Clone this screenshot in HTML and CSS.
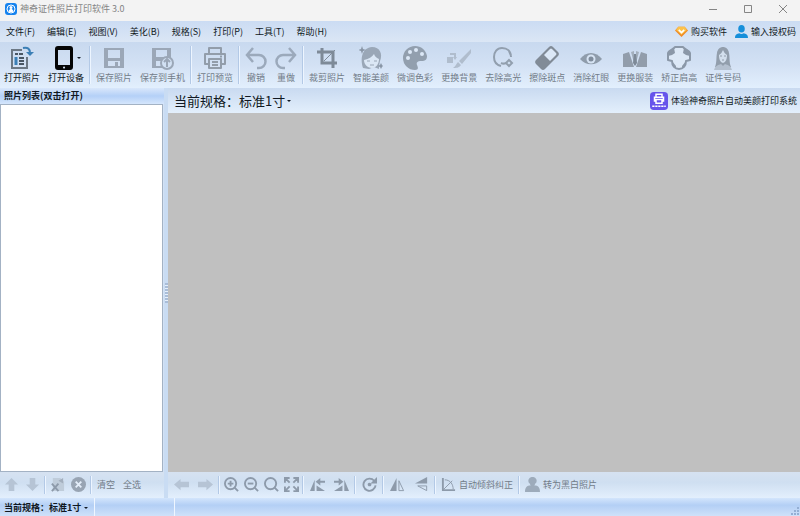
FILE: index.html
```html
<!DOCTYPE html>
<html lang="zh-CN">
<head>
  <meta charset="UTF-8">
  <meta name="viewport" content="width=device-width, initial-scale=1.0">
  <title>神奇证件照片打印软件 3.0</title>
  <link rel="stylesheet" href="styles.css">
</head>
<body>
  <header class="titlebar">
    <svg class="app-logo" viewBox="0 0 24 24"><rect width="24" height="24" rx="6" fill="#1683ee"/><circle cx="12" cy="12" r="8" fill="none" stroke="#fff" stroke-width="2"/><circle cx="12" cy="9" r="3" fill="#fff"/><path d="M7 17c1-4 3-5 5-5s4 1 5 5c-3 2-7 2-10 0z" fill="#fff"/></svg>
    <h1>神奇证件照片打印软件 3.0</h1>
    <div class="window-controls">
      <button aria-label="最小化"><svg viewBox="0 0 10 10"><path d="M1 5.5h8"/></svg></button>
      <button aria-label="最大化"><svg viewBox="0 0 10 10"><path d="M1.5 1.5h7v7h-7z"/></svg></button>
      <button aria-label="关闭"><svg viewBox="0 0 10 10"><path d="M1 1l8 8M9 1l-8 8"/></svg></button>
    </div>
  </header>

  <nav class="menubar">
    <button>文件(F)</button>
    <button>编辑(E)</button>
    <button>视图(V)</button>
    <button>美化(B)</button>
    <button>规格(S)</button>
    <button>打印(P)</button>
    <button>工具(T)</button>
    <button>帮助(H)</button>
    <div class="account">
      <a href="#buy">
        <svg viewBox="0 0 24 24"><path d="M6 3h12l6 7-12 12L0 10z" fill="#f08a24"/><path d="M6 3h12l4 6-10 9L2 9z" fill="#fcc24a"/><path d="M7 9l5 5 5-5" fill="none" stroke="#fff" stroke-width="3"/></svg>
        购买软件
      </a>
      <a href="#license">
        <svg viewBox="0 0 24 24"><ellipse cx="12" cy="7" rx="6" ry="7" fill="#168fda"/><path d="M0 24c0-7 4-8 8-9 2 2 6 2 8 0 4 1 8 2 8 9z" fill="#168fda"/></svg>
        输入授权码
      </a>
    </div>
  </nav>

  <div class="toolbar">
    <button class="tool">
      <svg viewBox="0 0 24 24"><path d="M12 4H2v18h15V11" fill="none" stroke="#6c7884" stroke-width="2"/><path d="M5 8h3M9 8h4M9 12h5M9 15h5M9 18h5" stroke="#4a5764" stroke-width="2"/><path d="M6 11v8" stroke="#3b7fb5" stroke-width="3"/><path d="M13 2c5-1 7 1 7 5" fill="none" stroke="#3b7fb5" stroke-width="2"/><path d="M16 6h8l-4 4z" fill="#3b7fb5"/></svg>
      打开照片
    </button>
    <button class="tool has-menu">
      <svg viewBox="0 0 24 24"><path fill-rule="evenodd" d="M4 0h12a3 3 0 0 1 3 3v18a3 3 0 0 1-3 3H4a3 3 0 0 1-3-3V3a3 3 0 0 1 3-3zM4 4v15h12V4zM10 20.5a1 1 0 1 0 .1 0z" fill="#050505"/></svg>
      打开设备
    </button>
    <span class="sep"></span>
    <button class="tool" disabled>
      <svg viewBox="0 0 24 24"><path fill-rule="evenodd" d="M2 2h20v20H2zM6 4v8h12V4zM6 15v5h12v-5z" fill="#9ba7b7"/><path d="M13 16h3v4h-3z" fill="#9ba7b7"/></svg>
      保存照片
    </button>
    <button class="tool" disabled>
      <svg viewBox="0 0 24 24"><path fill-rule="evenodd" d="M1 2h19v20H1zM5 4v7h11V4zM5 15v5h11v-5z" fill="#9ba7b7"/><circle cx="16" cy="17" r="6" fill="#d2e1f3" stroke="#9ba7b7" stroke-width="2"/><path d="M16 21v-7M13 16l3-3 3 3" fill="none" stroke="#9ba7b7" stroke-width="2"/></svg>
      保存到手机
    </button>
    <span class="sep"></span>
    <button class="tool" disabled>
      <svg viewBox="0 0 24 24" fill="none" stroke="#929daa" stroke-width="2" stroke-linejoin="round"><path d="M6 8V2h12v6M6 18H2V8h20v10h-4"/><path d="M6 13h12v9H6zM9 16h6M9 19h6M17 10.5h2"/></svg>
      打印预览
    </button>
    <span class="sep"></span>
    <button class="tool short" disabled>
      <svg viewBox="0 0 24 24" fill="none" stroke="#9ba9bb" stroke-width="2.5"><path d="M9 2L3 9l6 7M3 9h12a6 6 0 0 1 0 13h-2"/></svg>
      撤销
    </button>
    <button class="tool short" disabled>
      <svg viewBox="0 0 24 24" fill="none" stroke="#9ba9bb" stroke-width="2.5"><path d="M15 2l6 7-6 7M21 9H9a6 6 0 0 0 0 13h2"/></svg>
      重做
    </button>
    <span class="sep"></span>
    <button class="tool" disabled>
      <svg viewBox="0 0 24 24" fill="none" stroke="#7e8a98" stroke-width="3"><path d="M7 2v15h15M2 6h16v16"/><path d="M9 15L20 4" stroke-width="1"/></svg>
      裁剪照片
    </button>
    <button class="tool" disabled>
      <svg viewBox="0 0 24 24"><path d="M4 22C1 12 3 2 13 1c8 0 11 7 8 14-1 4-1 6-1 8l-5-2-5 2z" fill="#9aa7b7"/><path d="M5 14c5-1 8-3 10-6 1 3 3 4 5 5 0 5-3 9-7 9-5 0-8-4-8-8z" fill="#dbe7f5"/><path d="M8 15h3M15 15h3M11 19h4" stroke="#9aa7b7" stroke-width="1"/><path d="M3 0l1 3 3 1-3 1-1 3-1-3-3-1 3-1zM22 17l1 2 1 1-1 1-1 2-1-2-2-1 2-1z" fill="#8996a6"/></svg>
      智能美颜
    </button>
    <button class="tool" disabled>
      <svg viewBox="0 0 24 24"><path d="M12 0a12 12 0 0 0 0 24c4 0 3-3 2-5-1-3 1-4 4-4 5 0 6-2 6-5C23 4 18 0 12 0z" fill="#929fae"/><g fill="#dce8f6"><circle cx="5" cy="12" r="2"/><circle cx="7" cy="6" r="2"/><circle cx="13" cy="4" r="2"/><circle cx="19" cy="8" r="2"/></g></svg>
      微调色彩
    </button>
    <button class="tool" disabled>
      <svg viewBox="0 0 24 24" fill="#b0bdcd"><path d="M24 3v4l-9 11-3-3zM11 16l3 3c-2 3-5 3-8 3 3-2 3-4 5-6z"/><path d="M0 11h6v6H0zM3 7h6v4h1l-2 3-2-3h1V9H3z"/></svg>
      更换背景
    </button>
    <button class="tool" disabled>
      <svg viewBox="0 0 24 24" fill="none" stroke="#929fae" stroke-width="2"><path d="M20 11C20 5 16 2 11 2S3 6 3 11s3 8 7 9M18 5l2 5M10 17c2 1 3 1 5 0"/><path d="M18 14l3 3-3 3-3-3z"/></svg>
      去除高光
    </button>
    <button class="tool" disabled>
      <svg viewBox="0 0 24 24"><path d="M1 14L14 1a3 3 0 0 1 4 0l5 5a3 3 0 0 1 0 4L10 23a3 3 0 0 1-4 0l-5-5a3 3 0 0 1 0-4z" fill="#818b97"/><path d="M9 9l6-6q1-1 2 0l4 4q1 1 0 2l-6 6z" fill="#dce8f7"/></svg>
      擦除斑点
    </button>
    <button class="tool" disabled>
      <svg viewBox="0 0 24 24"><path d="M1 13c6-8 16-8 22 0-6 7-16 7-22 0z" fill="#8f9cab"/><circle cx="12" cy="13" r="4.500" fill="#d6e3f3"/><circle cx="12" cy="13" r="2.500" fill="#7f8c9c"/></svg>
      消除红眼
    </button>
    <button class="tool" disabled>
      <svg viewBox="0 0 24 24" fill="#929dab"><path d="M0 21V8l6-2 5 15zM24 21V8l-6-2-5 15z"/><path d="M8 6l3-1v12zM16 6l-3-1v12z" fill="#a3afbd"/><path d="M11 8h2l1 9-2 3-2-3z" fill="#7d8997"/></svg>
      更换服装
    </button>
    <button class="tool" disabled>
      <svg viewBox="0 0 24 24"><path d="M8 1h8c1 2 6 3 7 6v7l-4 1c0 5-3 8-7 8s-7-3-7-8l-4-1V7c1-3 6-4 7-6z" fill="#dce8f6" stroke="#8b98a8" stroke-width="2" stroke-linejoin="round"/><path d="M7 2l1 5-3 2-4 1V7c1-3 4-4 6-5zM17 2l-1 5 3 2 4 1V7c-1-3-4-4-6-5zM5 15l4 5v2c-3-1-4-4-4-7zM19 15l-4 5v2c3-1 4-4 4-7z" fill="#8b98a8"/></svg>
      矫正肩高
    </button>
    <button class="tool" disabled>
      <svg viewBox="0 0 24 24"><path d="M4 21C6 16 5 12 6 7c1-8 11-8 12 0 1 5 0 9 2 14z" fill="#929eac"/><path d="M8 9c2-1 3-3 4-5 1 2 2 4 4 5 0 4-1 7-4 8-3-1-4-4-4-8z" fill="#d3dfed"/><path d="M3 24c1-4 4-5 7-6l2 2 2-2c3 1 6 2 7 6z" fill="#b4c0cf"/><path d="M9 10h2M13 10h2M11 14h2" stroke="#929eac"/></svg>
      证件号码
    </button>
  </div>

  <main class="workspace">
    <aside class="side">
      <h2>照片列表(双击打开)</h2>
      <div class="photo-list"></div>
      <div class="actions">
        <button disabled aria-label="上移"><svg viewBox="0 0 16 16"><path d="M8 1l7 7h-4v7H5V8H1z" fill="#b6c4d5"/></svg></button>
        <button disabled aria-label="下移"><svg viewBox="0 0 16 16"><path d="M8 15l7-7h-4V1H5v7H1z" fill="#b6c4d5"/></svg></button>
        <span class="sep"></span>
        <button disabled aria-label="删除照片"><svg viewBox="0 0 16 16"><path d="M3 1h8l4 4v10H3z" fill="#bfccda"/><path d="M2 7l7 8M9 7l-7 8"/><path d="M9 4l5-3v6z" fill="#a3afbe"/></svg></button>
        <button disabled aria-label="移除"><svg viewBox="0 0 16 16"><circle cx="8" cy="8" r="8" fill="#98a4b3"/><path class="cross" d="M5 5l6 6M11 5l-6 6"/></svg></button>
        <span class="sep"></span>
        <button class="text" disabled>清空</button>
        <button class="text" disabled>全选</button>
      </div>
    </aside>

    <div class="splitter"><span class="grip"></span></div>

    <section class="editor">
      <div class="editor-head">
        <button class="spec">当前规格：标准1寸</button>
        <a href="#system">
          <svg viewBox="0 0 24 24"><rect width="24" height="24" rx="5" fill="#6654eb"/><g fill="none" stroke="#fff" stroke-width="2"><path d="M8 7V3h8v4M8 12H6V7h12v5h-2M8 10h8v5H8z"/><path d="M3 19h18" stroke-dasharray="3 1"/></g></svg>
          体验神奇照片自动美颜打印系统
        </a>
      </div>
      <div class="canvas"></div>
      <div class="actions">
        <button disabled aria-label="上一张"><svg viewBox="0 0 16 16"><path d="M0 8l7-6v3h9v6H7v3z" fill="#b6c4d5"/></svg></button>
        <button disabled aria-label="下一张"><svg viewBox="0 0 16 16"><path d="M16 8L9 2v3H0v6h9v3z" fill="#b6c4d5"/></svg></button>
        <span class="sep"></span>
        <button class="tight" disabled aria-label="放大"><svg viewBox="0 0 16 16"><circle cx="7" cy="7" r="6"/><path d="M4 7h6M7 4v6"/><path d="M11 11l4 4"/></svg></button>
        <button class="tight" disabled aria-label="缩小"><svg viewBox="0 0 16 16"><circle cx="7" cy="7" r="6"/><path d="M4 7h6"/><path d="M11 11l4 4"/></svg></button>
        <button class="tight" disabled aria-label="原始大小"><svg viewBox="0 0 16 16"><circle cx="7" cy="7" r="6"/><path d="M11 11l4 4"/></svg></button>
        <button class="tight" disabled aria-label="适合窗口"><svg viewBox="0 0 16 16"><path d="M1 6V1h5M10 1h5v5M15 10v5h-5M6 15H1v-5M1 1l5 5M15 1l-5 5M15 15l-5-5M1 15l5-5"/></svg></button>
        <span class="sep"></span>
        <button disabled aria-label="向左旋转"><svg viewBox="0 0 16 16"><path class="solid" d="M0 15L5 3v12zM7 9l9 6H7zM6 5l5-4v3h5v2h-5v3z"/></svg></button>
        <button disabled aria-label="向右旋转"><svg viewBox="0 0 16 16"><path class="solid" d="M16 15L11 3v12zM9 9l-9 6h9zM10 5L5 1v3H0v2h5v3z"/></svg></button>
        <span class="sep"></span>
        <button disabled aria-label="旋转"><svg viewBox="0 0 16 16"><path d="M13 4a6.500 6.500 0 1 0 1.500 5"/><path class="solid" d="M16 0v7H9zM8 6a2 2 0 1 0 .1 0z"/></svg></button>
        <span class="sep"></span>
        <button disabled aria-label="水平翻转"><svg viewBox="0 0 16 16"><path class="solid" d="M7 1v14H0z"/><path class="thin" d="M9.500 4v10.500h5z"/></svg></button>
        <button disabled aria-label="垂直翻转"><svg viewBox="0 0 16 16"><path class="solid" d="M14 0v7H1z"/><path class="thin" d="M13.500 9.500v5L4 9.500z"/></svg></button>
        <span class="sep"></span>
        <button class="labelled" disabled><svg viewBox="0 0 16 16"><path class="thin" d="M3 13L12 4M4 3c6 0 9 5 9 10"/><path d="M2 1v13h13"/></svg>自动倾斜纠正</button>
        <span class="sep"></span>
        <button class="labelled" disabled><svg viewBox="0 0 16 16"><path d="M8 0a4 4 0 0 1 3 7l-1 2c4 0 6 2 6 7H0c0-5 2-7 6-7L5 7a4 4 0 0 1 3-7z" fill="#9dabbb"/></svg>转为黑白照片</button>
      </div>
    </section>
  </main>

  <footer class="statusbar">
    <button class="status-spec">当前规格：标准1寸</button>
    <span class="status-cell"></span>
    <svg class="resize" viewBox="0 0 9 9"><path d="M6 0h2v2H6zM3 3h2v2H3zM6 3h2v2H6zM0 6h2v2H0zM3 6h2v2H3zM6 6h2v2H6z"/></svg>
  </footer>
</body>
</html>
```

FILE: styles.css
```css
:root {
  --text: #101822;
  --muted: #727c88;
  --icon: #8d9aaa;
  --line: #b3c9e6;
}

* {
  box-sizing: border-box;
}

body {
  margin: 0;
  height: 100vh;
  display: flex;
  flex-direction: column;
  overflow: hidden;
  font-family: "Noto Sans CJK SC", sans-serif;
  font-size: 9px;
  line-height: 12px;
  color: var(--text);
  background: #d3e2f5;
}

button {
  padding: 0;
  border: none;
  background: none;
  font: inherit;
  color: inherit;
  white-space: nowrap;
}

a {
  color: inherit;
  text-decoration: none;
}

svg {
  display: block;
  flex: none;
}

h1, h2 {
  margin: 0;
  font-size: 9px;
}

/* Title bar */
.titlebar {
  display: flex;
  align-items: center;
  height: 21px;
  padding: 0 5px 3px;
  gap: 3px;
  background: #f3f3f3;
}

.titlebar h1 {
  font-weight: 400;
  color: #858585;
}

.app-logo {
  width: 12px;
  height: 12px;
}

.window-controls {
  display: flex;
  margin-left: auto;
}

.window-controls button {
  display: flex;
  justify-content: center;
  width: 35px;
}

.window-controls button:last-child {
  width: 24px;
  margin-left: 6px;
}

.window-controls svg {
  width: 10px;
  height: 10px;
  fill: none;
  stroke: #858585;
}

/* Menu */
.menubar {
  display: flex;
  align-items: center;
  height: 21px;
  background: linear-gradient(#cbdcf3, #dbe6f5);
}

.menubar button {
  padding: 0 6px;
}

.account {
  display: flex;
  gap: 8px;
  margin-left: auto;
  padding-right: 4px;
}

.account a {
  display: flex;
  align-items: center;
  gap: 3px;
}

.account svg {
  width: 13px;
  height: 13px;
}

/* Main toolbar */
.toolbar {
  display: flex;
  height: 46px;
  padding-top: 4px;
  background: linear-gradient(#c8d9ef, #d3e1f4 50%, #e2effd);
}

.tool {
  display: flex;
  flex-direction: column;
  align-items: center;
  gap: 2px;
  padding: 0 4px;
}

.tool.short {
  padding: 0 3px;
}

.tool svg {
  width: 24px;
  height: 24px;
}

.tool:disabled,
.actions button:disabled {
  color: var(--muted);
}

.tool.has-menu {
  position: relative;
}

.tool.has-menu::after {
  position: absolute;
  top: 11px;
  right: 7px;
}

.has-menu::after,
.spec::after,
.status-spec::after {
  content: '';
  border: 2px solid transparent;
  border-top-color: var(--text);
  border-bottom: none;
}

.sep {
  width: 2px;
  margin: 0 1px;
  border-left: 1px solid var(--line);
  border-right: 1px solid #edf5ff;
}

.toolbar .sep {
  height: 38px;
}

/* Workspace */
.workspace {
  flex: 1;
  min-height: 0;
  display: grid;
  grid-template-columns: 164px 4px 1fr;
}

.side,
.editor {
  display: flex;
  flex-direction: column;
  min-width: 0;
}

.side h2 {
  height: 16px;
  padding: 2px 4px;
  background: linear-gradient(#d9e7fb, #b4d0f7 50%, #d5e6fc);
}

.photo-list {
  flex: 1;
  margin-right: 1px;
  border: 1px solid #a3b2c4;
  background: #fff;
}

.splitter {
  display: flex;
  align-items: center;
  justify-content: center;
  background: #c9dcf3;
}

.grip {
  width: 3px;
  height: 20px;
  background: repeating-linear-gradient(#a9bdd8 0 2px, #e6f0fc 2px 3px);
}

.editor-head {
  display: flex;
  align-items: center;
  justify-content: space-between;
  height: 25px;
  padding: 0 3px 0 6px;
  background: linear-gradient(#c9daf0, #e3effc);
}

.editor-head a {
  display: flex;
  align-items: center;
  gap: 3px;
}

.editor-head svg {
  width: 18px;
  height: 18px;
}

.spec {
  display: flex;
  align-items: center;
  gap: 2px;
  font-size: 13px;
  line-height: 18px;
}

.canvas {
  flex: 1;
  background: #c0c0c0;
}

/* Bottom action bars */
.actions {
  display: flex;
  align-items: center;
  height: 26px;
  padding: 0 1px 1px;
  background: linear-gradient(#d6e2f1, #cfdff1 40%, #e3effd);
}

.actions button {
  display: flex;
  align-items: center;
  justify-content: center;
  width: 24px;
}

.side .actions button {
  width: 21px;
}

.side .actions .text {
  width: 26px;
}

.actions .tight {
  width: 20px;
}

.actions .labelled {
  gap: 3px;
  width: auto;
  padding: 0 4px;
}

.actions svg {
  width: 15px;
  height: 15px;
  fill: none;
  stroke: var(--icon);
  stroke-width: 2;
}

.actions svg [fill] {
  stroke: none;
}

.actions .solid {
  fill: var(--icon);
  stroke: none;
}

.actions .thin {
  stroke-width: 1;
}

.actions .cross {
  stroke: #e4eefa;
}

.actions .sep {
  height: 18px;
}

/* Status bar */
.statusbar {
  display: flex;
  height: 18px;
  background: linear-gradient(#d3e5fc, #b3cff5 40%, #cfe1f9);
}

.status-spec {
  display: flex;
  align-items: center;
  gap: 3px;
  width: 95px;
  padding: 2px 4px 0;
  font-weight: 700;
  border-right: 1px solid #eff6ff;
}

.status-cell {
  width: 80px;
  border-right: 1px solid #eff6ff;
}

.resize {
  width: 9px;
  height: 9px;
  margin: auto 0 0 auto;
  fill: #94afd4;
}
```
